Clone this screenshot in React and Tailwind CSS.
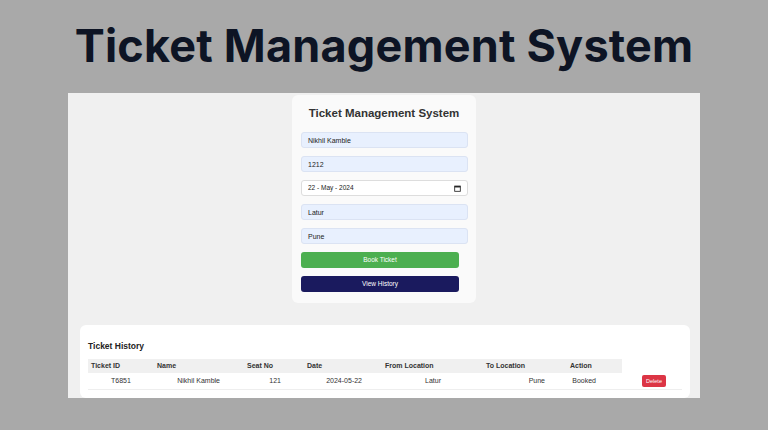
export default function App() {
  const inputCls = 'h-4 w-full rounded-[3px] border border-[#dbe3f3] bg-[#e8f0fe] px-1.5 text-[7px] leading-none text-[#222] flex items-center';
  return (
    <div className="w-[768px] h-[430px] bg-[#a9a9a9] overflow-hidden" style={{ fontFamily: 'Arial, "Liberation Sans", sans-serif' }}>
      <div className="h-[93px] flex justify-center pt-[20px]">
        <h1 className="text-[45px] leading-[52px] font-bold text-[#0d1424] tracking-[0.2px]" style={{ fontFamily: 'Inter, "Noto Sans", sans-serif' }}>Ticket Management System</h1>
      </div>
      <div className="ml-[68px] w-[632px] h-[305px] bg-[#f0f0f0] overflow-hidden flex flex-col items-center">
        <div className="mt-[2px] w-[184px] h-[208px] bg-[#fafafa] rounded-md px-[9px] pt-[10px] flex flex-col">
          <div className="text-center text-[11.5px] font-bold text-[#333] mb-[10px]">Ticket Management System</div>
          <div className="flex flex-col gap-2 w-[167px]">
            <div className={inputCls}>Nikhil Kamble</div>
            <div className={inputCls}>1212</div>
            <div className="h-4 w-full rounded-[3px] border border-[#ddd] bg-white px-1.5 text-[6.5px] text-[#222] flex items-center justify-between">
              <span>22 - May - 2024</span>
              <svg width="7" height="7" viewBox="0 0 10 10"><rect x="1" y="1.5" width="8" height="7.5" fill="none" stroke="#222" strokeWidth="1.2"/><rect x="1" y="1.5" width="8" height="2" fill="#222"/></svg>
            </div>
            <div className={inputCls}>Latur</div>
            <div className={inputCls}>Pune</div>
          </div>
          <div className="mt-2 flex flex-col gap-2 w-[158px]">
            <div className="h-4 rounded-[3px] bg-[#4caf50] text-white text-[6.5px] flex items-center justify-center">Book Ticket</div>
            <div className="h-4 rounded-[3px] bg-[#1a1a5e] text-white text-[6.5px] flex items-center justify-center">View History</div>
          </div>
        </div>
        <div className="mt-[22px] w-[610px] flex-1 bg-white rounded-md pl-[8px] pr-[8px] pt-[15px] self-start ml-[12px]">
          <div className="text-[8.5px] font-bold text-[#222] mb-[6px]">Ticket History</div>
          <div className="text-[7px] text-[#333] w-[594px]">
            <div className="flex h-[14px] items-center bg-[#f0f0f0] font-bold w-[534px]">
              <div className="w-[66px] pl-[3px]">Ticket ID</div>
              <div className="w-[90px] pl-[3px]">Name</div>
              <div className="w-[60px] pl-[3px]">Seat No</div>
              <div className="w-[78px] pl-[3px]">Date</div>
              <div className="w-[101px] pl-[3px]">From Location</div>
              <div className="w-[84px] pl-[3px]">To Location</div>
              <div className="w-[55px] pl-[3px]">Action</div>
            </div>
            <div className="flex h-[17px] items-center border-b border-[#eee]">
              <div className="w-[66px] text-center">T6851</div>
              <div className="w-[90px] text-right pr-[24px]">Nikhil Kamble</div>
              <div className="w-[60px] text-right pr-[23px]">121</div>
              <div className="w-[78px] text-right pr-[20px]">2024-05-22</div>
              <div className="w-[101px] text-right pr-[42px]">Latur</div>
              <div className="w-[84px] text-right pr-[22px]">Pune</div>
              <div className="w-[55px] text-right pr-[26px]">Booked</div>
              <div className="flex-1 flex justify-center pl-[4px]">
                <span className="bg-[#dc3545] text-white text-[5.5px] rounded-[2px] px-[4px] py-[2px]">Delete</span>
              </div>
            </div>
          </div>
        </div>
      </div>
    </div>
  );
}
